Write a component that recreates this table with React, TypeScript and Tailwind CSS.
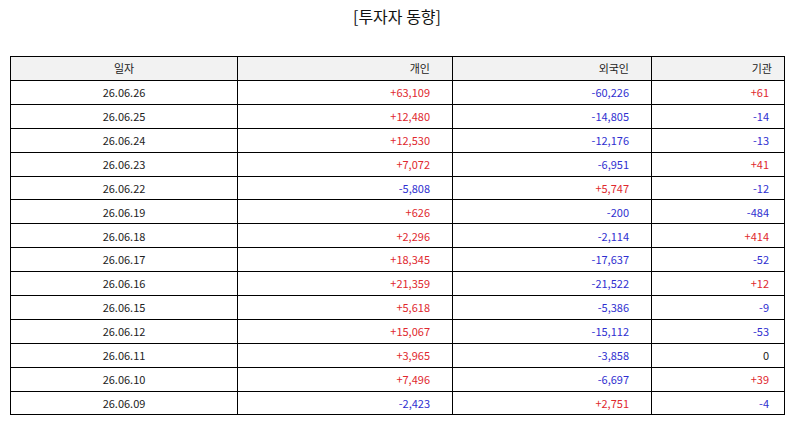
const rows: [string, string, string, string][] = [
  ['26.06.26', '+63,109', '-60,226', '+61'],
  ['26.06.25', '+12,480', '-14,805', '-14'],
  ['26.06.24', '+12,530', '-12,176', '-13'],
  ['26.06.23', '+7,072', '-6,951', '+41'],
  ['26.06.22', '-5,808', '+5,747', '-12'],
  ['26.06.19', '+626', '-200', '-484'],
  ['26.06.18', '+2,296', '-2,114', '+414'],
  ['26.06.17', '+18,345', '-17,637', '-52'],
  ['26.06.16', '+21,359', '-21,522', '+12'],
  ['26.06.15', '+5,618', '-5,386', '-9'],
  ['26.06.12', '+15,067', '-15,112', '-53'],
  ['26.06.11', '+3,965', '-3,858', '0'],
  ['26.06.10', '+7,496', '-6,697', '+39'],
  ['26.06.09', '-2,423', '+2,751', '-4'],
];

function tone(v: string) {
  if (v.startsWith('+')) return 'text-[#e0282e]';
  if (v.startsWith('-')) return 'text-[#2f2fd0]';
  return 'text-[#222222]';
}

export default function App() {
  return (
    <div className="w-[794px] h-[425px] bg-white px-[10px] font-['Noto_Sans_CJK_KR','Noto_Sans',sans-serif] text-[#222222]">
      <h1 className="pt-[4px] h-[56px] text-center text-[16px] leading-[24px] text-[#111111]">[투자자 동향]</h1>
      <table className="w-[774px] border-collapse table-fixed text-[11px]">
        <colgroup>
          <col className="w-[227px]" />
          <col className="w-[215px]" />
          <col className="w-[199px]" />
          <col className="w-[133px]" />
        </colgroup>
        <thead>
          <tr className="h-[24px] bg-[#f2f2f2]">
            <th className="border border-black font-normal text-center">일자</th>
            <th className="border border-black font-normal text-right pr-[22px]">개인</th>
            <th className="border border-black font-normal text-right pr-[22px]">외국인</th>
            <th className="border border-black font-normal text-right pr-[12px]">기관</th>
          </tr>
        </thead>
        <tbody>
          {rows.map(([d, a, b, c]) => (
            <tr key={d} className="h-[23.9px]">
              <td className="border border-black text-center">{d}</td>
              <td className={`border border-black text-right pr-[22px] ${tone(a)}`}>{a}</td>
              <td className={`border border-black text-right pr-[22px] ${tone(b)}`}>{b}</td>
              <td className={`border border-black text-right pr-[15px] ${tone(c)}`}>{c}</td>
            </tr>
          ))}
        </tbody>
      </table>
    </div>
  );
}
